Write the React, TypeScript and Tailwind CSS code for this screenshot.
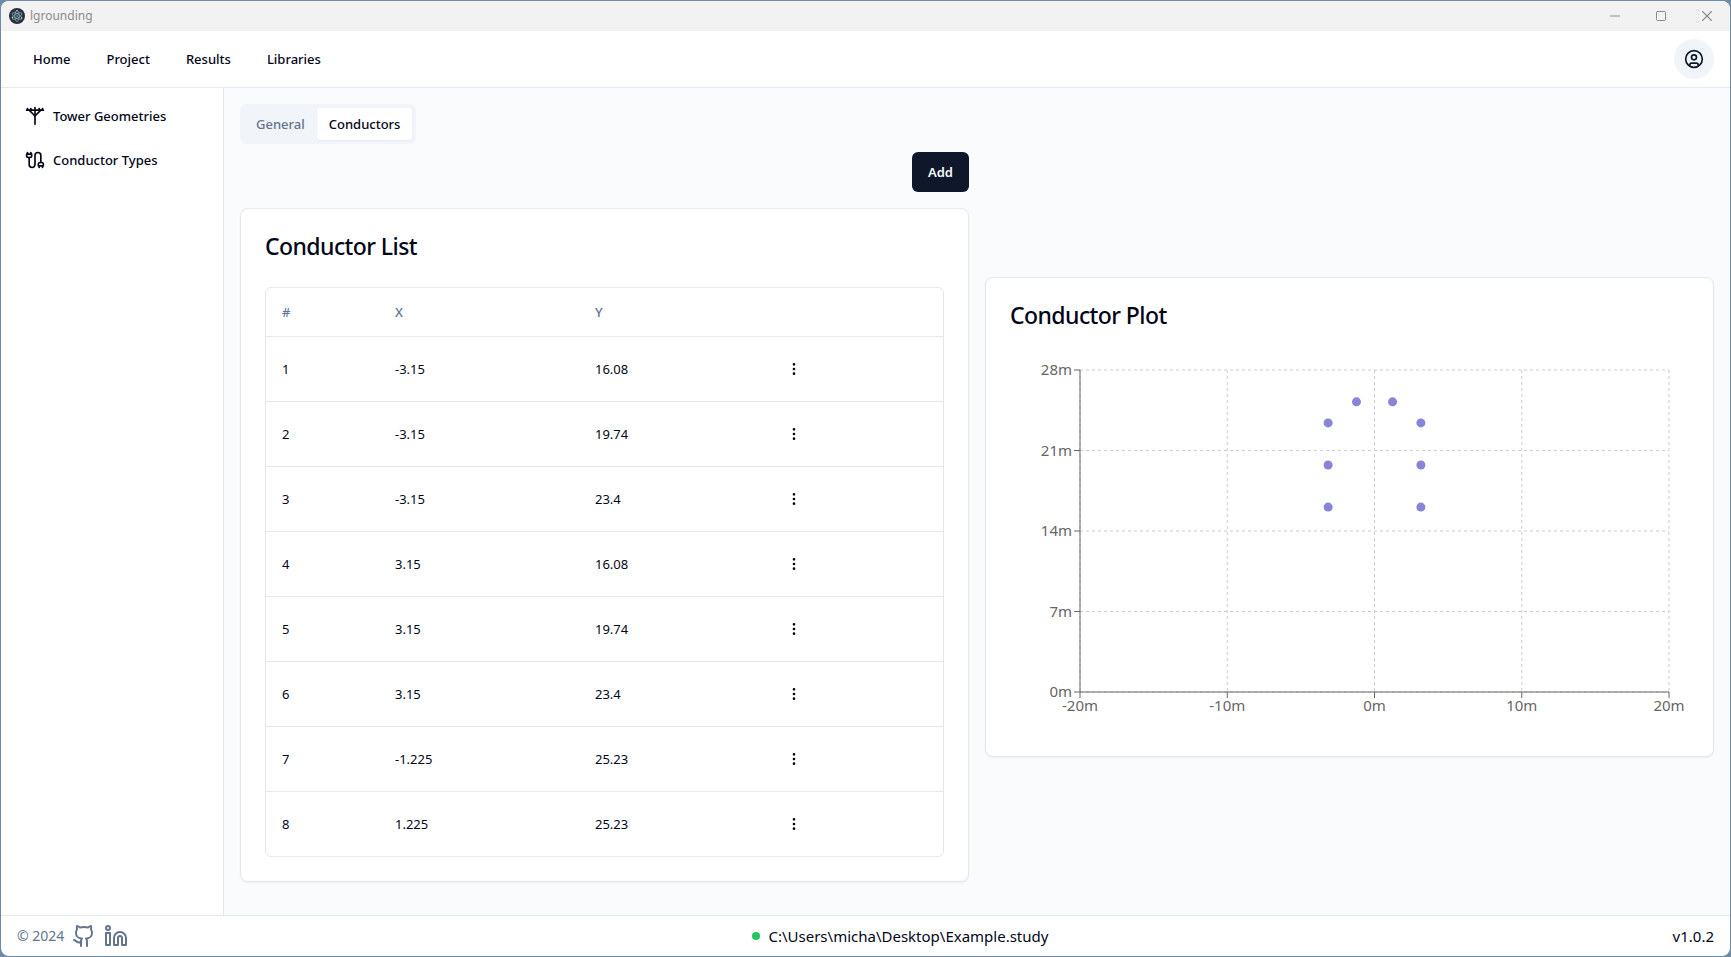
import { CircleUser, EllipsisVertical, Minus, Square, UtilityPole, X } from "lucide-react";

type Conductor = { x: number; y: number };

const conductors: Conductor[] = [
  { x: -3.15, y: 16.08 },
  { x: -3.15, y: 19.74 },
  { x: -3.15, y: 23.4 },
  { x: 3.15, y: 16.08 },
  { x: 3.15, y: 19.74 },
  { x: 3.15, y: 23.4 },
  { x: -1.225, y: 25.23 },
  { x: 1.225, y: 25.23 },
];

const PLOT = { left: 70, right: 659, top: 14, bottom: 336 };
const xTicks = [-20, -10, 0, 10, 20];
const yTicks = [0, 7, 14, 21, 28];
const scaleX = (v: number) => PLOT.left + ((v + 20) / 40) * (PLOT.right - PLOT.left);
const scaleY = (v: number) => PLOT.bottom - (v / 28) * (PLOT.bottom - PLOT.top);

function CableIcon() {
  return (
    <svg className="size-5" viewBox="0 0 24 24" fill="none" stroke="currentColor" strokeWidth="2" strokeLinecap="round" strokeLinejoin="round" aria-hidden="true">
      <path d="M4 9a2 2 0 0 1-2-2V5h6v2a2 2 0 0 1-2 2Z" />
      <path d="M3 5V3" />
      <path d="M7 5V3" />
      <path d="M19 15V6.5a3.5 3.5 0 0 0-7 0v11a3.5 3.5 0 0 1-7 0V9" />
      <path d="M17 21v-2" />
      <path d="M21 21v-2" />
      <path d="M22 19h-6v-2a2 2 0 0 1 2-2h2a2 2 0 0 1 2 2v2Z" />
    </svg>
  );
}

function AppLogo() {
  return (
    <svg className="size-4" viewBox="0 0 32 32" fill="none" aria-hidden="true">
      <circle cx="16" cy="16" r="16" fill="#2b2e3a" />
      <g stroke="#a9dbe6" strokeOpacity="0.8" strokeWidth="1.3">
        <ellipse cx="16" cy="16" rx="11" ry="4.4" transform="rotate(30 16 16)" />
        <ellipse cx="16" cy="16" rx="11" ry="4.4" transform="rotate(90 16 16)" />
        <ellipse cx="16" cy="16" rx="11" ry="4.4" transform="rotate(150 16 16)" />
      </g>
      <g fill="#a9dbe6">
        <circle cx="16" cy="16" r="1.4" />
        <circle cx="7" cy="19" r="1.5" />
        <circle cx="25" cy="20" r="1.5" />
        <circle cx="16" cy="5.500" r="1.5" />
      </g>
    </svg>
  );
}

function TitleBar() {
  return (
    <div className="flex h-[30px] shrink-0 items-center justify-between bg-[#f2f2f2] pl-2 pr-[14px] text-[#8b8b8b]">
      <div className="flex items-center gap-[5px]">
        <AppLogo />
        <span className="text-[12px] leading-4">lgrounding</span>
      </div>
      <div className="flex items-center gap-7">
        <button aria-label="Minimize" className="grid size-[18px] place-items-center">
          <Minus size={16} strokeWidth={1.5} />
        </button>
        <button aria-label="Maximize" className="grid size-[18px] place-items-center">
          <Square size={12} strokeWidth={2} />
        </button>
        <button aria-label="Close" className="grid size-[18px] place-items-center">
          <X size={18} strokeWidth={1.5} />
        </button>
      </div>
    </div>
  );
}

function Header() {
  return (
    <header className="flex h-[57px] shrink-0 items-center justify-between border-b border-slate-200 px-4">
      <nav className="flex items-center gap-1 text-[13px] font-medium leading-5">
        {["Home", "Project", "Results", "Libraries"].map((item) => (
          <a key={item} href="#" className="px-4 py-2">
            {item}
          </a>
        ))}
      </nav>
      <button aria-label="Account" className="grid size-10 place-items-center rounded-full bg-slate-100 text-slate-900">
        <CircleUser size={20} />
      </button>
    </header>
  );
}

function Sidebar() {
  return (
    <aside className="w-[223px] shrink-0 border-r border-slate-200 bg-white">
      <nav className="flex flex-col gap-1 p-2 text-[13px] font-medium leading-5">
        <a href="#" className="flex h-10 items-center gap-2 px-4">
          <UtilityPole className="size-5" />
          Tower Geometries
        </a>
        <a href="#" className="flex h-10 items-center gap-2 px-4">
          <CableIcon />
          Conductor Types
        </a>
      </nav>
    </aside>
  );
}

function ConductorTable() {
  return (
    <section className="rounded-lg border border-slate-200 bg-white p-6 shadow-xs">
      <h2 className="pb-7 text-[23px] font-medium leading-[26px] tracking-tight">Conductor List</h2>
      <div className="rounded-md border border-slate-200">
        <table className="w-full table-fixed text-left text-[13px] leading-5">
          <colgroup>
            <col className="w-[113px]" />
            <col className="w-[200px]" />
            <col className="w-[183px]" />
            <col />
          </colgroup>
          <thead>
            <tr className="h-12 border-b border-slate-200 text-slate-500">
              <th className="px-4 font-medium">#</th>
              <th className="px-4 font-medium">X</th>
              <th className="px-4 font-medium">Y</th>
              <th aria-label="Actions" />
            </tr>
          </thead>
          <tbody>
            {conductors.map((c, i) => (
              <tr key={i} className="h-[65px] border-b border-slate-200 last:border-b-0">
                <td className="px-4">{i + 1}</td>
                <td className="px-4">{c.x}</td>
                <td className="px-4">{c.y}</td>
                <td className="px-4">
                  <button aria-label={`Open menu for conductor ${i + 1}`} className="grid size-8 place-items-center">
                    <EllipsisVertical size={16} />
                  </button>
                </td>
              </tr>
            ))}
          </tbody>
        </table>
      </div>
    </section>
  );
}

function ConductorPlot() {
  return (
    <section className="rounded-lg border border-slate-200 bg-white p-6 shadow-xs">
      <h2 className="pb-7 text-[23px] font-medium leading-[26px] tracking-tight">Conductor Plot</h2>
      <svg viewBox="0 0 679 376" className="block h-auto w-full text-[15px]" role="img" aria-label="Conductor positions">
        <g stroke="#ccc" strokeDasharray="3 3">
          {yTicks.map((t) => (
            <line key={t} x1={PLOT.left} x2={PLOT.right} y1={scaleY(t)} y2={scaleY(t)} />
          ))}
          {xTicks.map((t) => (
            <line key={t} x1={scaleX(t)} x2={scaleX(t)} y1={PLOT.top} y2={PLOT.bottom} />
          ))}
        </g>
        <g stroke="#666">
          <line x1={PLOT.left} x2={PLOT.right} y1={PLOT.bottom} y2={PLOT.bottom} />
          <line x1={PLOT.left} x2={PLOT.left} y1={PLOT.top} y2={PLOT.bottom} />
          {xTicks.map((t) => (
            <line key={t} x1={scaleX(t)} x2={scaleX(t)} y1={PLOT.bottom} y2={PLOT.bottom + 6} />
          ))}
          {yTicks.map((t) => (
            <line key={t} x1={PLOT.left - 6} x2={PLOT.left} y1={scaleY(t)} y2={scaleY(t)} />
          ))}
        </g>
        <g fill="#666">
          {xTicks.map((t) => (
            <text key={t} x={scaleX(t)} y={PLOT.bottom + 19} textAnchor="middle">
              {`${t}m`}
            </text>
          ))}
          {yTicks.map((t) => (
            <text key={t} x={PLOT.left - 8} y={scaleY(t) + 5} textAnchor="end">
              {`${t}m`}
            </text>
          ))}
        </g>
        <g fill="#8884d8">
          {conductors.map((c, i) => (
            <circle key={i} cx={scaleX(c.x)} cy={scaleY(c.y)} r="4.5" />
          ))}
        </g>
      </svg>
    </section>
  );
}

function Footer() {
  return (
    <footer className="flex h-[41px] shrink-0 items-center justify-between border-t border-slate-200 px-4 text-[15px] leading-6">
      <div className="flex items-center gap-2 text-slate-500">
        <span className="text-[14px]">© 2024</span>
        <a href="#" aria-label="GitHub">
          <svg className="size-6" viewBox="0 0 24 24" fill="none" stroke="currentColor" strokeWidth="2" strokeLinecap="round" strokeLinejoin="round" aria-hidden="true">
            <path d="M15 22v-4a4.8 4.8 0 0 0-1-3.500c3 0 6-2 6-5.500.08-1.250-.27-2.480-1-3.500.28-1.150.28-2.350 0-3.500 0 0-1 0-3 1.500-2.640-.5-5.360-.5-8 0C6 2 5 2 5 2c-.3 1.150-.3 2.350 0 3.500A5.403 5.403 0 0 0 4 9c0 3.500 3 5.500 6 5.500-.39.49-.68 1.050-.85 1.650-.17.6-.22 1.230-.15 1.850v4" />
            <path d="M9 18c-4.510 2-5-2-7-2" />
          </svg>
        </a>
        <a href="#" aria-label="LinkedIn">
          <svg className="size-6" viewBox="0 0 24 24" fill="none" stroke="currentColor" strokeWidth="2" strokeLinecap="round" strokeLinejoin="round" aria-hidden="true">
            <path d="M16 8a6 6 0 0 1 6 6v7h-4v-7a2 2 0 0 0-2-2 2 2 0 0 0-2 2v7h-4v-7a6 6 0 0 1 6-6z" />
            <rect width="4" height="12" x="2" y="9" />
            <circle cx="4" cy="4" r="2" />
          </svg>
        </a>
      </div>
      <div className="flex items-center gap-2">
        <span className="size-2 rounded-full bg-[#22c55e]" />
        C:\Users\micha\Desktop\Example.study
      </div>
      <div>v1.0.2</div>
    </footer>
  );
}

export default function App() {
  return (
    <div className="h-screen bg-[#6f8ba4] p-px font-['Noto_Sans','Open_Sans',sans-serif] text-slate-950">
      <div className="flex h-full flex-col overflow-hidden rounded-lg bg-white">
        <TitleBar />
        <Header />
        <div className="flex min-h-0 flex-1">
          <Sidebar />
          <main className="min-w-0 flex-1 overflow-auto bg-[#fafbfd] p-4">
            <div role="tablist" className="inline-flex h-10 items-center rounded-md bg-slate-100 p-1 align-top text-[13px] font-medium leading-5">
              <button role="tab" aria-selected="false" className="rounded-sm px-3 py-[6px] text-slate-500">
                General
              </button>
              <button role="tab" aria-selected="true" className="rounded-sm bg-white px-3 py-[6px] shadow-xs">
                Conductors
              </button>
            </div>
            <div className="mt-2 grid grid-cols-2 items-center gap-4">
              <div className="flex flex-col gap-4">
                <button className="h-10 self-end rounded-md bg-slate-900 px-4 text-[13px] font-semibold leading-5 text-slate-50">Add</button>
                <ConductorTable />
              </div>
              <ConductorPlot />
            </div>
          </main>
        </div>
        <Footer />
      </div>
    </div>
  );
}
